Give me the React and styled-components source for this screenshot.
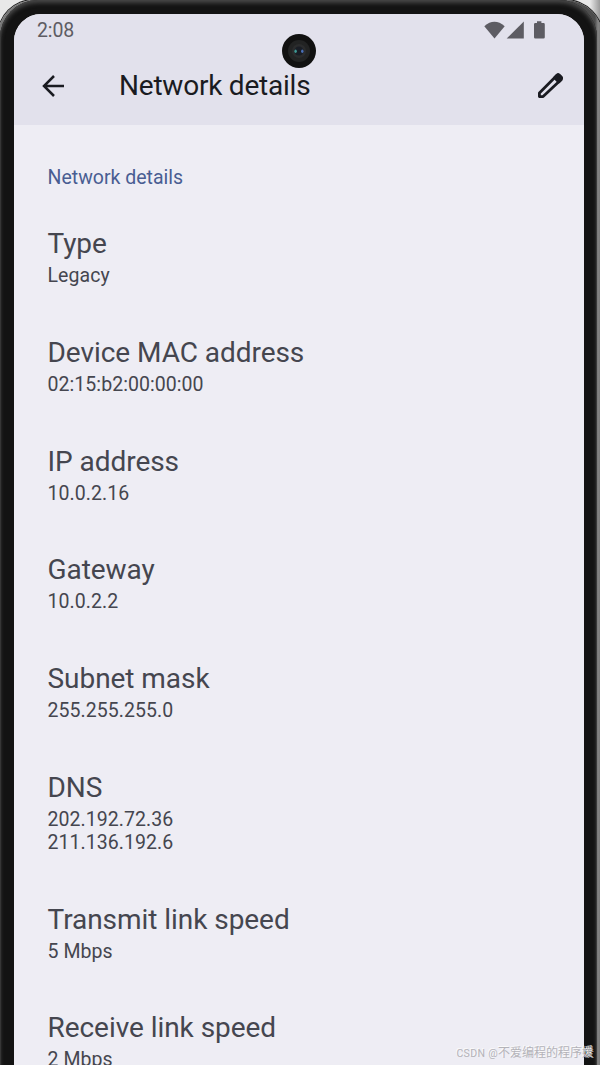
import React from 'react';
import styled, { createGlobalStyle } from 'styled-components';

const GlobalStyle = createGlobalStyle`
  * {
    box-sizing: border-box;
  }

  html, body {
    margin: 0;
    padding: 0;
    overflow: hidden;
  }
`;

const Device = styled.div`
  position: relative;
  width: 600px;
  height: 1065px;
  overflow: hidden;
  background: linear-gradient(90deg, #e8e8e8 0 590px, #9a9a9a 600px);
  font-family: Roboto, 'Noto Sans', sans-serif;
`;

const Frame = styled.div`
  width: 605px;
  margin-left: -2px;
  padding-left: 2px;
  border-radius: 36px 38px 0 0;
  background: linear-gradient(90deg, #777 0 300px, #4c4c4c 597px, #858585 600px, #686868 605px);
  box-shadow: 0 0 0 1px #222;
`;

const Bezel = styled.div`
  width: 597px;
  height: 1100px;
  padding: 14px 13px 0 14px;
  border-radius: 38px 38px 0 0;
  background: #131313;
  box-shadow: inset 0 3px 4px #484848, inset 1px 0 1px #303030, inset -1px 0 1px #383838;
`;

const Screen = styled.div`
  height: 1086px;
  border-radius: 27px 27px 0 0;
  overflow: hidden;
  background: #eeedf4;
`;

const Header = styled.header`
  height: 111px;
  background: #e2e1ec;
`;

const StatusBar = styled.div`
  display: flex;
  justify-content: space-between;
  height: 44px;
  padding: 5px 36px 0 23px;
  color: #5d5c63;
`;

const Clock = styled.span`
  font-size: 19.5px;
  line-height: 23px;
  letter-spacing: -0.1px;
`;

const StatusIcons = styled.svg`
  width: 64px;
  height: 24px;
`;

const AppBar = styled.div`
  display: flex;
  align-items: center;
  height: 56px;
  padding: 0 19px 0 24px;
  color: #1a1b21;

  svg {
    display: block;
    width: 30px;
    height: 30px;
  }
`;

const Title = styled.h1`
  flex: 1;
  margin: 0 0 0 51px;
  font-size: 28px;
  font-weight: 400;
  line-height: 34px;
  letter-spacing: -0.22px;
`;

const IconButton = styled.button`
  padding: 0;
  border: 0;
  background: none;
  color: inherit;
`;

const Content = styled.main`
  padding: 41px 33.5px 0;
`;

const Category = styled.h2`
  margin: 0 0 36px;
  color: #495d92;
  font-size: 19.5px;
  font-weight: 400;
  line-height: 24px;
`;

const Preference = styled.div`
  padding-bottom: 47px;
`;

const Name = styled.div`
  margin-bottom: 3px;
  color: #45464f;
  font-size: 28px;
  line-height: 36px;
  letter-spacing: -0.05px;
`;

const Value = styled.div`
  color: #45464f;
  font-size: 19.5px;
  line-height: 22.8px;
  letter-spacing: 0.06px;
`;

const Camera = styled.div`
  position: absolute;
  top: 34px;
  left: 282px;
  width: 34px;
  height: 34px;
`;

const Watermark = styled.div`
  position: absolute;
  right: 6px;
  bottom: 2px;
  color: #b4b3b9;
  font-family: 'Noto Sans CJK SC', sans-serif;
  font-size: 12px;
  line-height: 18px;
  white-space: nowrap;
  text-shadow: -1px -1px 0 #fafafa;

  span {
    font-family: Roboto, sans-serif;
    font-size: 10.5px;
    letter-spacing: 0.35px;
  }
`;

const preferences = [
  { name: 'Type', values: ['Legacy'] },
  { name: 'Device MAC address', values: ['02:15:b2:00:00:00'] },
  { name: 'IP address', values: ['10.0.2.16'] },
  { name: 'Gateway', values: ['10.0.2.2'] },
  { name: 'Subnet mask', values: ['255.255.255.0'] },
  { name: 'DNS', values: ['202.192.72.36', '211.136.192.6'] },
  { name: 'Transmit link speed', values: ['5 Mbps'] },
  { name: 'Receive link speed', values: ['2 Mbps'] },
];

const BackIcon = () => (
  <svg viewBox="0 0 30 30" fill="none" stroke="currentColor" strokeWidth="2.5">
    <path d="M26 15H6.5M16 5L6 15l10 10" />
  </svg>
);

const EditIcon = () => (
  <svg viewBox="0 0 30 30" fill="none" stroke="currentColor" strokeWidth="2.8" strokeLinejoin="round">
    <path d="M4.4 25.6v-3.7L22 4.3q1.1-1 2.2 0l2 2q1 1.1 0 2.2L8.1 25.6z" />
    <path d="M19.6 6.8l4.2 4.1 2.4-2.4q1-1.1 0-2.2l-2-2q-1.1-1-2.2 0z" fill="currentColor" />
  </svg>
);

const App = () => {
  return (
    <>
      <GlobalStyle />
      <Device>
        <Frame>
          <Bezel>
            <Screen>
              <Header>
                <StatusBar>
                  <Clock>2:08</Clock>
                  <StatusIcons viewBox="0 0 64 24" fill="currentColor">
                    <path d="M0.3 7.2Q10.4-1.6 20.7 7.2L10.5 19.6z" />
                    <path d="M39.8 2.5v17H22.7z" />
                    <path d="M53 2.3h4.4v1.8h2.1q1.3 0 1.3 1.3v12.8q0 1.3-1.3 1.3h-8.2q-1.3 0-1.3-1.3V5.4q0-1.3 1.3-1.3H53z" />
                  </StatusIcons>
                </StatusBar>
                <AppBar>
                  <IconButton aria-label="Back"><BackIcon /></IconButton>
                  <Title>Network details</Title>
                  <IconButton aria-label="Edit"><EditIcon /></IconButton>
                </AppBar>
              </Header>
              <Content>
                <Category>Network details</Category>
                {preferences.map(({ name, values }) => (
                  <Preference key={name}>
                    <Name>{name}</Name>
                    {values.map(value => <Value key={value}>{value}</Value>)}
                  </Preference>
                ))}
              </Content>
            </Screen>
          </Bezel>
        </Frame>
        <Camera>
          <svg width="34" height="34" viewBox="0 0 34 34">
            <circle cx="17" cy="17" r="17" fill="#111" />
            <circle cx="17" cy="17" r="11" fill="#222323" />
            <circle cx="17" cy="17" r="7" fill="#2b2c2d" />
            <circle cx="17" cy="17" r="4.5" fill="#191d25" />
            <ellipse cx="13.6" cy="17.3" rx="1.2" ry="1.8" fill="#3f9a94" />
            <ellipse cx="20.3" cy="17.3" rx="1.2" ry="1.8" fill="#4a70b8" />
          </svg>
        </Camera>
        <Watermark><span>CSDN @</span>不爱编程的程序媛</Watermark>
      </Device>
    </>
  );
};

export default App;
